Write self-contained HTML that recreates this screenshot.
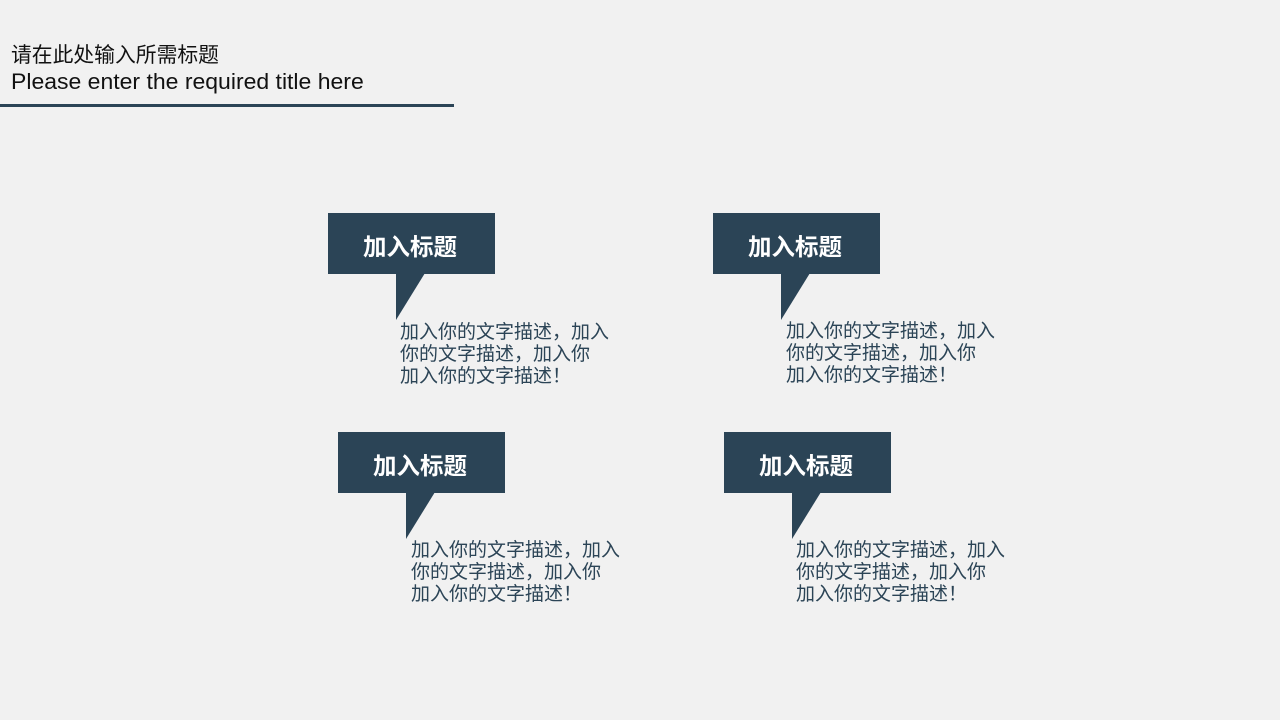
<!DOCTYPE html>
<html><head><meta charset="utf-8"><style>
body{margin:0;width:1280px;height:720px;background:#f1f1f1;position:relative;overflow:hidden;font-family:"Liberation Sans","Noto Sans CJK SC",sans-serif;}
.t1{position:absolute;left:11px;top:44px;font-size:20.8px;color:#111;line-height:24px}
.t2{position:absolute;left:11px;top:69px;font-size:22px;color:#111;line-height:25px;transform-origin:0 0;transform:scaleX(1.045)}
.line{position:absolute;left:0;top:104px;width:454px;height:3px;background:#2b4456}
.box{position:absolute;width:167px;height:61px;background:#2b4456;color:#fff;font-weight:bold;font-size:23.5px;line-height:68px;text-align:center;box-sizing:border-box;padding-right:3px}
.tail{position:absolute}
.desc{position:absolute;font-size:19px;line-height:22px;color:#2b4456;width:240px}
</style></head><body>
<div class="t1">请在此处输入所需标题</div>
<div class="t2">Please enter the required title here</div>
<div class="line"></div>

<div class="box" style="left:328px;top:213px">加入标题</div>
<svg class="tail" style="left:396px;top:273px" width="30" height="48"><polygon points="0,0 29,0 0,47" fill="#2b4456"/></svg>
<div class="desc" style="left:400px;top:322px">加入你的文字描述，加入<br>你的文字描述，加入你<br>加入你的文字描述！</div>

<div class="box" style="left:713px;top:213px">加入标题</div>
<svg class="tail" style="left:781px;top:273px" width="30" height="48"><polygon points="0,0 29,0 0,47" fill="#2b4456"/></svg>
<div class="desc" style="left:786px;top:321px">加入你的文字描述，加入<br>你的文字描述，加入你<br>加入你的文字描述！</div>

<div class="box" style="left:338px;top:432px">加入标题</div>
<svg class="tail" style="left:406px;top:492px" width="30" height="48"><polygon points="0,0 29,0 0,47" fill="#2b4456"/></svg>
<div class="desc" style="left:411px;top:540px">加入你的文字描述，加入<br>你的文字描述，加入你<br>加入你的文字描述！</div>

<div class="box" style="left:724px;top:432px">加入标题</div>
<svg class="tail" style="left:792px;top:492px" width="30" height="48"><polygon points="0,0 29,0 0,47" fill="#2b4456"/></svg>
<div class="desc" style="left:796px;top:540px">加入你的文字描述，加入<br>你的文字描述，加入你<br>加入你的文字描述！</div>
</body></html>
